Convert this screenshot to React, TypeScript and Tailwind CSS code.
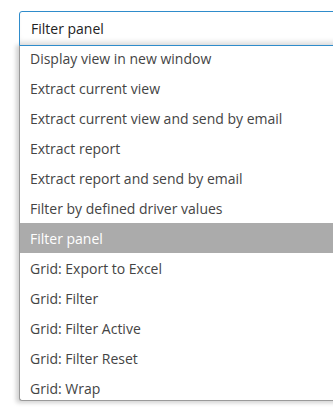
const items = [
  "Display view in new window",
  "Extract current view",
  "Extract current view and send by email",
  "Extract report",
  "Extract report and send by email",
  "Filter by defined driver values",
  "Filter panel",
  "Grid: Export to Excel",
  "Grid: Filter",
  "Grid: Filter Active",
  "Grid: Filter Reset",
  "Grid: Wrap",
]

export default function App() {
  return (
    <div className="h-[408px] w-[333px] overflow-hidden bg-white pt-[11px] pl-[19px] font-['Open_Sans',sans-serif]">
      <div className="w-[340px]">
        <div className="relative z-10 flex h-[35px] items-center rounded-tl-[3px] border border-[#2f8ccb] bg-white pl-[11px] text-[14px] text-[#222] shadow-[inset_0_-6px_6px_-4px_rgba(0,0,0,0.18)]">
          Filter panel
        </div>
        <div className="-mt-[3px] h-[358px] overflow-hidden rounded-bl-[3px] border-b border-l border-[#9a9a9a] bg-white shadow-[-3px_2px_4px_rgba(0,0,0,0.18)]">
          {items.map((item) => (
            <div
              key={item}
              className={
                "flex h-[30px] items-center pl-[10px] text-[14px] " +
                (item === "Filter panel" ? "bg-[#ababab] text-white" : "text-[#444]")
              }
            >
              {item}
            </div>
          ))}
        </div>
      </div>
    </div>
  )
}
